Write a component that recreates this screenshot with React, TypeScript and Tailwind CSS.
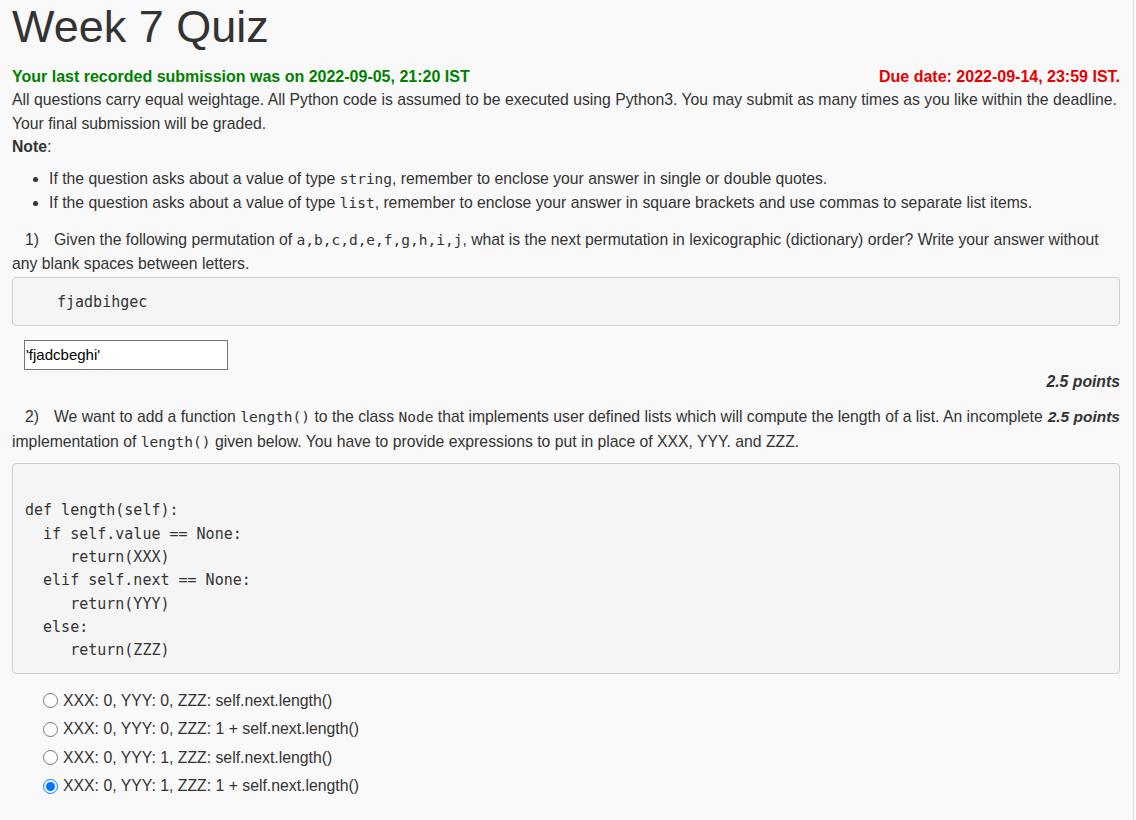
import { useState } from "react";

const mono = "font-['Consolas','DejaVu_Sans_Mono',monospace]";

function Code({ children }: { children: React.ReactNode }) {
  return <code className={`${mono} text-[14.5px]`}>{children}</code>;
}

const options = [
  "XXX: 0, YYY: 0, ZZZ: self.next.length()",
  "XXX: 0, YYY: 0, ZZZ: 1 + self.next.length()",
  "XXX: 0, YYY: 1, ZZZ: self.next.length()",
  "XXX: 0, YYY: 1, ZZZ: 1 + self.next.length()",
];

export default function App() {
  const [picked, setPicked] = useState(3);

  return (
    <div className="min-h-[820px] w-[1136px] bg-white">
      <div className="min-h-[820px] w-[1134px] border-r border-[#dcdcdc] bg-[#f9f9f9] px-3 font-['Liberation_Sans',Arial,sans-serif] text-[15.75px] leading-[23.4px] text-[#333]">
        <div className="w-[1108px]">
          {/* Title */}
          <h1 className="pt-[3px] text-[45px] leading-[48px] font-normal text-[#333]">Week 7 Quiz</h1>

          {/* submission info */}
          <div className="mt-[14px] flex justify-between text-[16px] font-bold">
            <span className="text-[#008000]">Your last recorded submission was on 2022-09-05, 21:20 IST</span>
            <span className="text-[#e60000]">Due date: 2022-09-14, 23:59 IST.</span>
          </div>
          <p>
            All questions carry equal weightage. All Python code is assumed to be executed using Python3. You may submit as many times as you like within the deadline. Your final submission will be graded.
          </p>
          <p>
            <b>Note</b>:
          </p>
          <ul className="mt-[8px] list-disc pl-[37px] leading-[24px]">
            <li>
              If the question asks about a value of type <Code>string</Code>, remember to enclose your answer in single or double quotes.
            </li>
            <li>
              If the question asks about a value of type <Code>list</Code>, remember to enclose your answer in square brackets and use commas to separate list items.
            </li>
          </ul>

          {/* Question 1 */}
          <div className="mt-[13px] indent-[13px] leading-[24.5px]">
            1)<span className="inline-block w-[15px]" />
            Given the following permutation of <Code>a,b,c,d,e,f,g,h,i,j</Code>, what is the next permutation in lexicographic (dictionary) order? Write your answer without any blank spaces between letters.
          </div>
          <pre className={`mt-0 h-[49px] rounded-[4px] border border-[#cfcfcf] bg-[#f5f5f5] pt-[13px] pl-[44px] text-[15px] leading-[23px] text-[#333] ${mono}`}>
            fjadbihgec
          </pre>
          <div className="mt-[14px] pl-[12px]">
            <input
              type="text"
              defaultValue="'fjadcbeghi'"
              className="h-[30px] w-[204px] border border-[#767676] bg-white px-[1px] text-[15px] text-black outline-none font-['Liberation_Sans',Arial,sans-serif]"
            />
          </div>
          <div className="mt-0 text-right text-[15.75px] font-bold italic">2.5 points</div>

          {/* Question 2 */}
          <div className="mt-[12px] leading-[24.5px]">
            <span className="float-right text-[15.5px] font-bold italic">2.5 points</span>
            <span className="ml-[13px]">2)</span>
            <span className="inline-block w-[15px]" />
            We want to add a function <Code>length()</Code> to the class <Code>Node</Code> that implements user defined lists which will compute the length of a list. An incomplete implementation of <Code>length()</Code> given below. You have to provide expressions to put in place of XXX, YYY. and ZZZ.
          </div>
          <pre className={`mt-[9px] rounded-[4px] border border-[#cfcfcf] bg-[#f5f5f5] px-[12px] pt-[12px] pb-[11px] text-[15px] leading-[23.3px] text-[#333] ${mono}`}>
{`
def length(self):
  if self.value == None:
     return(XXX)
  elif self.next == None:
     return(YYY)
  else:
     return(ZZZ)`}
          </pre>

          {/* options */}
          <div className="mt-[12px] flex flex-col pl-[31px]">
            {options.map((o, i) => (
              <label key={i} className="flex h-[28.5px] items-center gap-[5px] text-[15.8px]">
                <input
                  type="radio"
                  name="q2"
                  checked={picked === i}
                  onChange={() => setPicked(i)}
                  className="m-0 h-[15px] w-[15px] accent-[#0075ff]"
                />
                <span>{o}</span>
              </label>
            ))}
          </div>
        </div>
      </div>
    </div>
  );
}
